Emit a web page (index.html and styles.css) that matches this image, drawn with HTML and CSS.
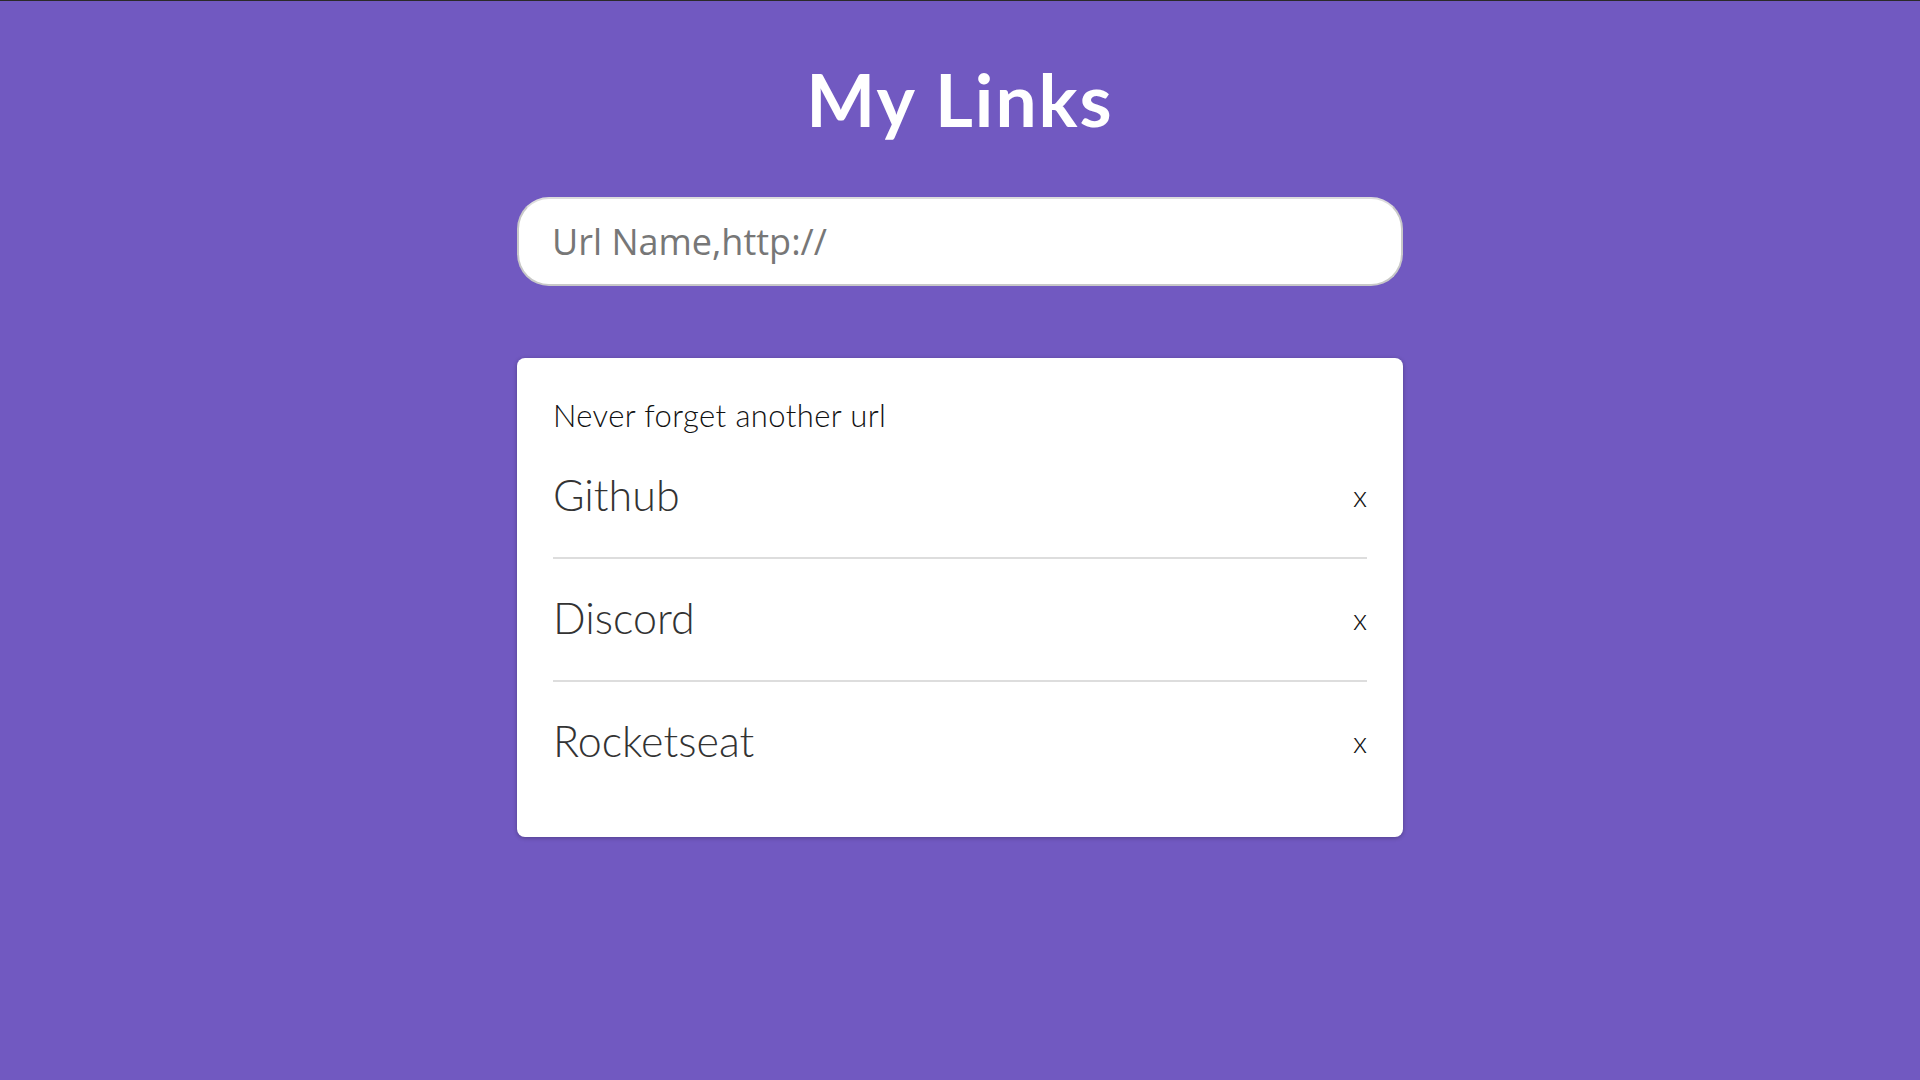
FILE: index.html
```html
<!DOCTYPE html>
<html lang="en">
<head>
<meta charset="utf-8">
<title>My Links</title>
<link rel="stylesheet" href="styles.css">
</head>
<body>
  <main class="app">
    <h1 class="title">My Links</h1>
    <form class="form">
      <input class="url-input" type="text" placeholder="Url Name,http://">
    </form>
    <section class="card">
      <p class="card-intro">Never forget another url</p>
      <ul class="links">
        <li class="link-row"><a class="link-name" href="#">Github</a><button class="remove" type="button">x</button></li>
        <li class="link-row"><a class="link-name" href="#">Discord</a><button class="remove" type="button">x</button></li>
        <li class="link-row"><a class="link-name" href="#">Rocketseat</a><button class="remove" type="button">x</button></li>
      </ul>
    </section>
  </main>
</body>
</html>
```

FILE: styles.css
```css
* {
  box-sizing: border-box;
}

html, body {
  margin: 0;
  padding: 0;
}

body {
  min-height: 100vh;
  background: #7159c1;
  border-top: 1px solid #2a2a2a;
  font-family: Lato, "Noto Sans", sans-serif;
}

.app {
  width: 886px;
  margin: 0 auto;
  display: flex;
  flex-direction: column;
}

.title {
  margin: 55px 0 0;
  text-align: center;
  color: #fff;
  font-size: 73px;
  line-height: 86px;
  font-weight: 700;
  letter-spacing: 2px;
}

.form {
  margin-top: 55px;
}

.url-input {
  display: block;
  width: 100%;
  height: 89px;
  padding: 0 33px;
  border: 2px solid #c8c8c8;
  border-top-color: #dcdcdc;
  border-radius: 32px;
  background: #fff;
  font-family: "Open Sans", sans-serif;
  font-size: 36px;
  color: #555;
  outline: none;
}

.url-input::placeholder {
  color: #777;
}

.card {
  margin-top: 72px;
  height: 479px;
  background: #fff;
  border-radius: 8px;
  box-shadow: 0 1px 4px rgba(0, 0, 0, 0.28);
  padding: 39px 36px 34px;
}

.card-intro {
  margin: 0 0 3px;
  font-size: 31px;
  line-height: 36px;
  font-weight: 300;
  color: #111;
  letter-spacing: 0.4px;
}

.links {
  list-style: none;
  margin: 0;
  padding: 0;
}

.link-row {
  display: flex;
  justify-content: space-between;
  align-items: center;
  padding: 32px 0 36px;
  border-bottom: 2px solid #dddddd;
}

.link-row:last-child {
  border-bottom: none;
}

.link-name {
  font-size: 43px;
  line-height: 53px;
  font-weight: 300;
  color: #333;
  text-decoration: none;
}

.remove {
  border: none;
  background: none;
  padding: 0;
  font-family: Lato, sans-serif;
  font-size: 30px;
  font-weight: 300;
  line-height: 36px;
  color: #111;
  cursor: pointer;
}
```
